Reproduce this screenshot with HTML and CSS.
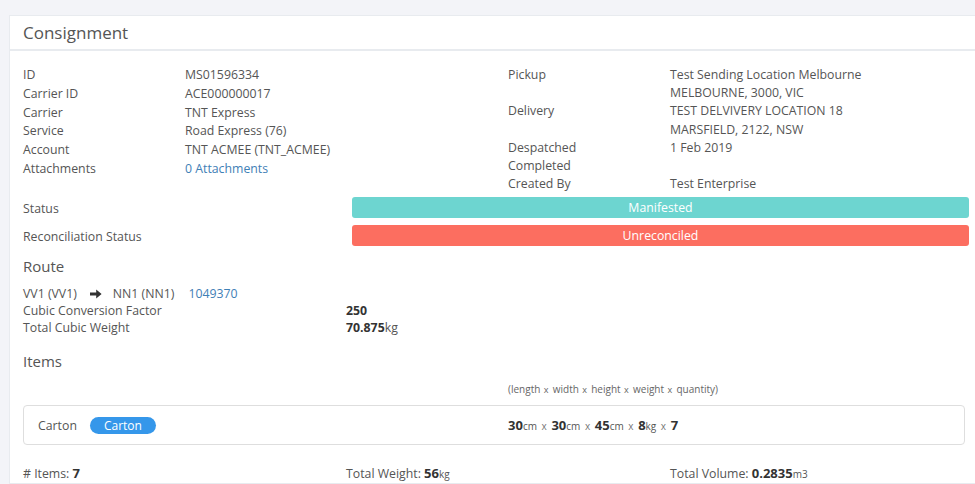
FILE: index.html
```html
<!DOCTYPE html>
<html>
<head>
<meta charset="utf-8">
<link rel="stylesheet" href="styles.css">
</head>
<body>
<div class="card">
  <div class="card-header">Consignment</div>
  <div class="card-body">
    <div class="details">
      <div class="col col-left">
        <div class="row"><span class="label">ID</span><span class="value">MS01596334</span></div>
        <div class="row"><span class="label">Carrier ID</span><span class="value">ACE000000017</span></div>
        <div class="row"><span class="label">Carrier</span><span class="value">TNT Express</span></div>
        <div class="row"><span class="label">Service</span><span class="value">Road Express (76)</span></div>
        <div class="row"><span class="label">Account</span><span class="value">TNT ACMEE (TNT_ACMEE)</span></div>
        <div class="row"><span class="label">Attachments</span><span class="value link">0 Attachments</span></div>
      </div>
      <div class="col col-right">
        <div class="row"><span class="label">Pickup</span><span class="value">Test Sending Location Melbourne<br>MELBOURNE, 3000, VIC</span></div>
        <div class="row"><span class="label">Delivery</span><span class="value">TEST DELVIVERY LOCATION 18<br>MARSFIELD, 2122, NSW</span></div>
        <div class="row"><span class="label">Despatched</span><span class="value">1 Feb 2019</span></div>
        <div class="row"><span class="label">Completed</span><span class="value"></span></div>
        <div class="row"><span class="label">Created By</span><span class="value">Test Enterprise</span></div>
      </div>
    </div>

    <div class="status-row">
      <span class="status-label">Status</span>
      <div class="bar bar-manifested">Manifested</div>
    </div>
    <div class="status-row">
      <span class="status-label">Reconciliation Status</span>
      <div class="bar bar-unreconciled">Unreconciled</div>
    </div>

    <h2 class="section-title route-title">Route</h2>
    <div class="route-line">
      <span>VV1 (VV1)</span>
      <svg class="arrow" width="12" height="10" viewBox="0 0 12 10"><path d="M0 3.6h6.2V0.6L11.6 5 6.2 9.4V6.4H0z" fill="#333"/></svg>
      <span>NN1 (NN1)</span>
      <span class="link route-id">1049370</span>
    </div>
    <div class="metric"><span class="metric-label">Cubic Conversion Factor</span><span class="metric-value"><b>250</b></span></div>
    <div class="metric"><span class="metric-label">Total Cubic Weight</span><span class="metric-value"><b>70.875</b>kg</span></div>

    <h2 class="section-title items-title">Items</h2>
    <div class="hint-row">
      <span></span>
      <span class="hint">(length<small> x </small> width<small> x </small> height<small> x </small> weight<small> x </small> quantity)</span>
    </div>
    <div class="item-box">
      <div class="item-name">Carton <span class="badge">Carton</span></div>
      <div class="dims"><b>30</b><small>cm</small><i> x </i><b>30</b><small>cm</small><i> x </i><b>45</b><small>cm</small><i> x </i><b>8</b><small>kg</small><i> x </i><b>7</b></div>
    </div>

    <div class="totals">
      <div># Items: <b>7</b></div>
      <div>Total Weight: <b>56</b><small>kg</small></div>
      <div>Total Volume: <b>0.2835</b><small>m3</small></div>
    </div>
  </div>
</div>
</body>
</html>
```

FILE: styles.css
```css
html, body {
  margin: 0;
  padding: 0;
}
body {
  background: #f3f4f8;
  font-family: "Open Sans", "Liberation Sans", sans-serif;
  font-size: 12.3px;
  color: #555;
  overflow: hidden;
  width: 975px;
  height: 484px;
}
.card {
  margin: 15px 0 0 9px;
  width: 1000px;
  background: #fff;
  border: 1px solid #e8ebef;
  border-right: none;
}
.card-header {
  height: 33px;
  display: flex;
  align-items: center;
  padding-left: 13px;
  font-size: 17px;
  color: #555;
  border-bottom: 2px solid #e8ebef;
}
.card-body {
  padding: 15px 0 0 13px;
  width: 970px;
}
.details {
  display: grid;
  grid-template-columns: 485px 485px;
}
.row {
  display: grid;
  grid-template-columns: 162px 1fr;
}
.col-left .row { line-height: 18.8px; }
.col-right .row { line-height: 18.2px; }
.link { color: #3f80b6; }

.status-row {
  display: grid;
  grid-template-columns: 329px 617px;
  align-items: center;
  margin-top: 3px;
  height: 22px;
}
.status-row + .status-row { margin-top: 6px; }
.status-label { position: relative; top: 1px; }
.bar {
  height: 21px;
  line-height: 22px;
  border-radius: 3px;
  color: #fff;
  text-align: center;
}
.bar-manifested { background: #6dd5d0; }
.bar-unreconciled { background: #fc6e60; }

.section-title {
  margin: 0;
  font-weight: normal;
  font-size: 15px;
  color: #555;
  line-height: 20px;
}
.route-title { margin-top: 10px; }
.route-line {
  margin-top: 9px;
  display: flex;
  align-items: center;
  line-height: 17px;
}
.arrow { margin: 0 11px 0 13px; }
.route-id { margin-left: 14px; }
.metric {
  display: grid;
  grid-template-columns: 323px 1fr;
  line-height: 17px;
}
.metric-value b { color: #333; }

.items-title { margin-top: 15px; }
.hint-row {
  display: grid;
  grid-template-columns: 485px 1fr;
  margin-top: 11px;
  line-height: 14px;
}
.hint { font-size: 10px; color: #666; }
.hint small { font-size: 9px; margin: 0 2px 0 1px; }

.item-box {
  margin-top: 8px;
  width: 926px;
  height: 38px;
  border: 1px solid #dedede;
  border-radius: 4px;
  display: grid;
  grid-template-columns: 470px 1fr;
  align-items: center;
  padding-left: 14px;
  box-sizing: content-box;
}
.item-name { display: flex; align-items: center; }
.badge {
  display: inline-block;
  margin-left: 13px;
  background: #3597ea;
  color: #fff;
  border-radius: 9px;
  height: 17px;
  line-height: 17px;
  padding: 0 14px;
  font-size: 12px;
}
.dims { color: #333; }
.dims b { font-size: 13px; }
.dims small { font-size: 10px; color: #555; }
.dims i { font-style: normal; font-size: 10px; color: #777; margin: 0 2px; }

.totals {
  margin-top: 19px;
  display: grid;
  grid-template-columns: 323px 324px 323px;
  line-height: 18px;
}
.totals b { color: #333; font-size: 13px; }
.totals small { font-size: 10px; }
```
